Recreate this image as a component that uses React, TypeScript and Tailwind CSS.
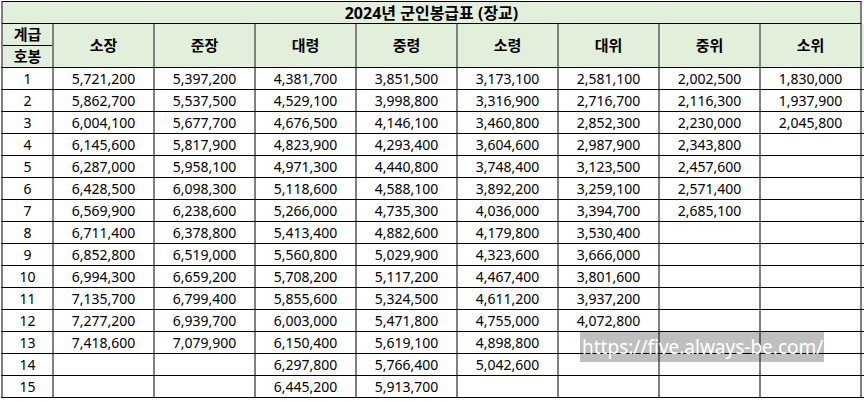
const ranks = ["소장", "준장", "대령", "중령", "소령", "대위", "중위", "소위"];

const pay: string[][] = [
  ["5,721,200", "5,397,200", "4,381,700", "3,851,500", "3,173,100", "2,581,100", "2,002,500", "1,830,000"],
  ["5,862,700", "5,537,500", "4,529,100", "3,998,800", "3,316,900", "2,716,700", "2,116,300", "1,937,900"],
  ["6,004,100", "5,677,700", "4,676,500", "4,146,100", "3,460,800", "2,852,300", "2,230,000", "2,045,800"],
  ["6,145,600", "5,817,900", "4,823,900", "4,293,400", "3,604,600", "2,987,900", "2,343,800", ""],
  ["6,287,000", "5,958,100", "4,971,300", "4,440,800", "3,748,400", "3,123,500", "2,457,600", ""],
  ["6,428,500", "6,098,300", "5,118,600", "4,588,100", "3,892,200", "3,259,100", "2,571,400", ""],
  ["6,569,900", "6,238,600", "5,266,000", "4,735,300", "4,036,000", "3,394,700", "2,685,100", ""],
  ["6,711,400", "6,378,800", "5,413,400", "4,882,600", "4,179,800", "3,530,400", "", ""],
  ["6,852,800", "6,519,000", "5,560,800", "5,029,900", "4,323,600", "3,666,000", "", ""],
  ["6,994,300", "6,659,200", "5,708,200", "5,117,200", "4,467,400", "3,801,600", "", ""],
  ["7,135,700", "6,799,400", "5,855,600", "5,324,500", "4,611,200", "3,937,200", "", ""],
  ["7,277,200", "6,939,700", "6,003,000", "5,471,800", "4,755,000", "4,072,800", "", ""],
  ["7,418,600", "7,079,900", "6,150,400", "5,619,100", "4,898,800", "", "", ""],
  ["", "", "6,297,800", "5,766,400", "5,042,600", "", "", ""],
  ["", "", "6,445,200", "5,913,700", "", "", "", ""],
];

function cellWidth(i: number) {
  return i === ranks.length - 1 ? "w-[103px] border-r-2" : "w-[101px]";
}

export default function App() {
  return (
    <div
      className="relative bg-white w-[864px] h-[402px] pt-px pl-px text-black"
      style={{ fontFamily: '"Noto Sans", "Noto Sans CJK KR", sans-serif' }}
    >
      {/* Title */}
      <div className="w-[861px] h-[23px] border-t border-b border-black border-x-2 border-x-[#808080] bg-[#e2efda] flex items-center justify-center text-[16px] font-bold leading-none">
        2024년 군인봉급표 (장교)
      </div>

      {/* Header */}
      <div className="flex h-[44px] border-b border-black bg-[#e2efda] text-[15px] font-bold leading-none">
        <div className="w-[51px] border-l-2 border-[#808080] flex flex-col">
          <div className="h-[22px] border-b border-black flex items-center justify-center">계급</div>
          <div className="h-[21px] flex items-center justify-center">호봉</div>
        </div>
        {ranks.map((r, i) => (
          <div key={r} className={`${cellWidth(i)} border-l-2 border-[#808080] flex items-center justify-center`}>
            {r}
          </div>
        ))}
      </div>

      {/* Rows */}
      {pay.map((row, n) => (
        <div key={n} className="flex h-[22px] border-b border-black text-[14px] leading-none">
          <div className="w-[51px] border-l-2 border-[#808080] flex items-center justify-center">{n + 1}</div>
          {row.map((v, i) => (
            <div key={i} className={`${cellWidth(i)} border-l-2 border-[#808080] flex items-center justify-center`}>
              {v}
            </div>
          ))}
        </div>
      ))}

      {/* Watermark */}
      <div className="absolute left-[580px] top-[332px] w-[244px] h-[30px] bg-black/25 text-white text-[19px] leading-none flex items-center pl-[2px]">
        https://five.always-be.com/
      </div>
    </div>
  );
}
